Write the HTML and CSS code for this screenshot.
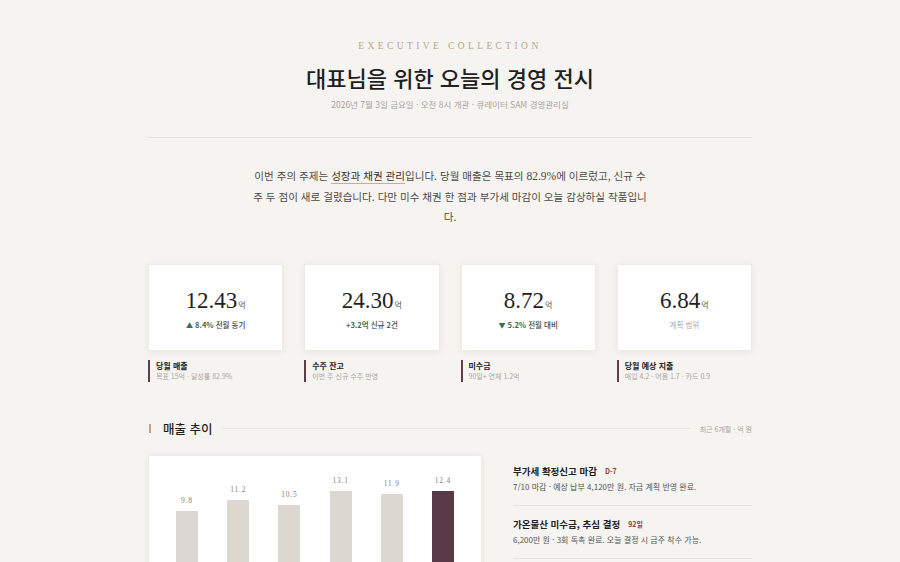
FILE: index.html
```html
<!DOCTYPE html>
<html lang="ko">
<head>
<meta charset="utf-8">
<title>Executive Collection</title>
<link rel="stylesheet" href="styles.css">
</head>
<body>
<div class="page">
  <header class="hero">
    <div class="eyebrow">EXECUTIVE COLLECTION</div>
    <h1 class="title">대표님을 위한 오늘의 경영 전시</h1>
    <div class="meta">2026년 7월 3일 금요일 · 오전 8시 개관 · 큐레이터 SAM 경영관리실</div>
  </header>
  <hr class="rule">
  <p class="intro">이번 주의 주제는 <span class="hl">성장과 채권 관리</span>입니다. 당월 매출은 목표의 <span class="num">82.9%</span>에 이르렀고, 신규 수주 두 점이 새로 걸렸습니다. 다만 미수 채권 한 점과 부가세 마감이 오늘 감상하실 작품입니다.</p>

  <section class="kpis">
    <div class="kpi">
      <div class="card">
        <div class="value">12.43<span class="unit">억</span></div>
        <div class="delta up"><span class="tri">▲</span> 8.4% <span class="dl">전월 동기</span></div>
      </div>
      <div class="caption"><div class="cap-t">당월 매출</div><div class="cap-s">목표 15억 · 달성률 82.9%</div></div>
    </div>
    <div class="kpi">
      <div class="card">
        <div class="value">24.30<span class="unit">억</span></div>
        <div class="delta up">+3.2억 <span class="dl">신규 2건</span></div>
      </div>
      <div class="caption"><div class="cap-t">수주 잔고</div><div class="cap-s">이번 주 신규 수주 반영</div></div>
    </div>
    <div class="kpi">
      <div class="card">
        <div class="value">8.72<span class="unit">억</span></div>
        <div class="delta up"><span class="tri">▼</span> 5.2% <span class="dl">전월 대비</span></div>
      </div>
      <div class="caption"><div class="cap-t">미수금</div><div class="cap-s">90일+ 연체 1.2억</div></div>
    </div>
    <div class="kpi">
      <div class="card">
        <div class="value">6.84<span class="unit">억</span></div>
        <div class="delta muted">계획 범위</div>
      </div>
      <div class="caption"><div class="cap-t">당월 예상 지출</div><div class="cap-s">매입 4.2 · 어음 1.7 · 카드 0.9</div></div>
    </div>
  </section>

  <div class="sec-head">
    <span class="mark"></span>
    <h2 class="sec-title">매출 추이</h2>
    <span class="sec-line"></span>
    <span class="sec-meta">최근 6개월 · 억 원</span>
  </div>

  <section class="trend">
    <div class="chart">
      <div class="bars">
        <div class="col"><span class="blabel">9.8</span><span class="bar" style="height:65px"></span></div>
        <div class="col"><span class="blabel">11.2</span><span class="bar" style="height:76px"></span></div>
        <div class="col"><span class="blabel">10.5</span><span class="bar" style="height:71px"></span></div>
        <div class="col"><span class="blabel">13.1</span><span class="bar" style="height:85px"></span></div>
        <div class="col"><span class="blabel">11.9</span><span class="bar" style="height:82px"></span></div>
        <div class="col"><span class="blabel">12.4</span><span class="bar now" style="height:85px"></span></div>
      </div>
    </div>
    <div class="notes">
      <div class="note">
        <div class="note-t">부가세 확정신고 마감<span class="badge">D-7</span></div>
        <div class="note-d">7/10 마감 · 예상 납부 4,120만 원. 자금 계획 반영 완료.</div>
      </div>
      <div class="note">
        <div class="note-t">가온물산 미수금, 추심 결정<span class="badge">92일</span></div>
        <div class="note-d">6,200만 원 · 3회 독촉 완료. 오늘 결정 시 금주 착수 가능.</div>
      </div>
      <div class="note">
        <div class="note-t">신규 수주 계약 검토</div>
        <div class="note-d">2건 · 합계 3.2억 원.</div>
      </div>
    </div>
  </section>
</div>
</body>
</html>
```

FILE: styles.css
```css
html, body {
  margin: 0;
  padding: 0;
  background: #f6f4f0;
}
body {
  font-family: "Noto Sans CJK KR", "Noto Sans", sans-serif;
  color: #222;
}
.page {
  width: 604px;
  margin: 0 auto;
  padding-top: 40px;
}
.hero {
  text-align: center;
}
.eyebrow {
  font-family: "Liberation Serif", serif;
  font-size: 9.5px;
  line-height: 12px;
  letter-spacing: 3.4px;
  color: #b8a58c;
}
.title {
  margin: 10px 0 0;
  font-size: 22px;
  line-height: 30px;
  font-weight: 500;
  color: #1f1f1f;
}
.meta {
  margin-top: 6px;
  font-size: 8.5px;
  line-height: 12px;
  color: #a8a5a0;
}
.rule {
  margin: 27px 0 0;
  border: 0;
  border-top: 1px solid #e7e3dc;
}
.intro {
  width: 400px;
  margin: 28px auto 0;
  text-align: center;
  font-size: 10.55px;
  line-height: 20.5px;
  color: #4d4a47;
}
.hl {
  color: #3a2e2e;
  border-bottom: 1px solid #c7ad93;
}
.num {
  font-family: "Liberation Serif", serif;
  font-size: 11.5px;
}
.kpis {
  margin-top: 36px;
  display: grid;
  grid-template-columns: repeat(4, 1fr);
  gap: 21px;
}
.card {
  height: 87px;
  background: #fff;
  box-shadow: 0 1px 6px rgba(60, 50, 40, 0.08);
  border: 1px solid #efebe5;
  box-sizing: border-box;
  display: flex;
  flex-direction: column;
  align-items: center;
  justify-content: center;
  padding-top: 4px;
}
.value {
  font-family: "Liberation Serif", serif;
  font-size: 23px;
  line-height: 26px;
  color: #1e1e1e;
}
.unit {
  font-family: "Noto Sans CJK KR", sans-serif;
  font-size: 8px;
  color: #555;
  margin-left: 1px;
}
.delta {
  margin-top: 1px;
  font-size: 7.5px;
  line-height: 11px;
  font-weight: 700;
  color: #3f6d55;
}
.delta .dl {
  color: #444;
  font-weight: 500;
}
.tri {
  font-size: 7px;
}
.delta.muted {
  color: #b0aca6;
  font-weight: 400;
}
.caption {
  margin-top: 9px;
  border-left: 2px solid #5d3d48;
  padding-left: 6px;
}
.cap-t {
  font-size: 8px;
  line-height: 11px;
  font-weight: 700;
  color: #222;
}
.cap-s {
  font-size: 7px;
  line-height: 11px;
  color: #aaa6a0;
}
.sec-head {
  margin-top: 37px;
  display: flex;
  align-items: center;
  height: 20px;
}
.mark {
  width: 2px;
  height: 9px;
  background: #b8a58c;
  margin-left: 1px;
}
.sec-title {
  margin: 0 0 0 12px;
  font-size: 12.5px;
  line-height: 20px;
  font-weight: 500;
  color: #1f1f1f;
}
.sec-line {
  flex: 1;
  height: 1px;
  background: #e7e3dc;
  margin: 0 10px;
}
.sec-meta {
  font-size: 7px;
  color: #aaa6a0;
}
.trend {
  margin-top: 16px;
  display: grid;
  grid-template-columns: 334px 1fr;
  gap: 31px;
}
.chart {
  background: #fff;
  border: 1px solid #efebe5;
  box-shadow: 0 1px 6px rgba(60, 50, 40, 0.08);
  padding: 20px 27px 30px;
}
.bars {
  height: 100px;
  display: flex;
  justify-content: space-between;
  align-items: flex-end;
}
.col {
  width: 22px;
  display: flex;
  flex-direction: column;
  align-items: center;
}
.blabel {
  font-family: "Liberation Serif", serif;
  font-size: 7.5px;
  line-height: 10px;
  letter-spacing: 0.8px;
  color: #85807a;
  margin-bottom: 5px;
}
.bar {
  display: block;
  width: 22px;
  background: #ddd8cf;
}
.bar.now {
  background: #5a3a46;
}
.note {
  padding: 11px 0 12px;
  border-bottom: 1px solid #e7e3dc;
}
.note:first-child {
  padding-top: 9px;
}
.note-t {
  font-size: 9.5px;
  line-height: 14px;
  font-weight: 700;
  color: #222;
}
.badge {
  margin-left: 8px;
  font-size: 7px;
  font-weight: 700;
  color: #8e3b3b;
  vertical-align: 1px;
}
.note-d {
  margin-top: 3px;
  font-size: 8px;
  line-height: 12px;
  color: #555;
}
```
